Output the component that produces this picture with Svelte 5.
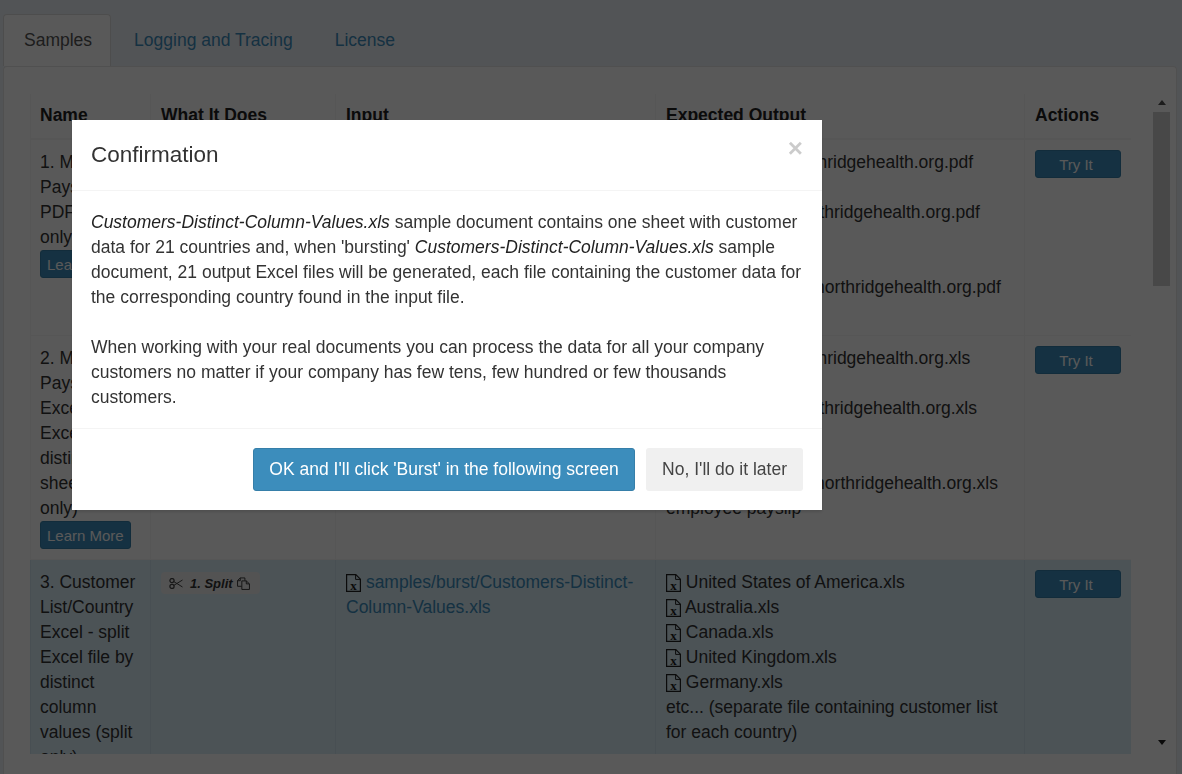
<script>
    const tabs = ['Samples', 'Logging and Tracing', 'License'];

    const rows = [
        {
            name: '1. Monthly Payslips PDF (split only)',
            input: 'samples/burst/Payslips-Distinct-Sheets.pdf',
            output: [
                'clyde.grew@northridgehealth.org.pdf',
                'kyle.butford@northridgehealth.org.pdf',
                'alfreda.waldback@northridgehealth.org.pdf',
            ],
        },
        {
            name: '2. Monthly Payslips Excel - split Excel file by distinct sheets (split only)',
            input: 'samples/burst/Payslips-Distinct-Sheets.xls',
            output: [
                'clyde.grew@northridgehealth.org.xls',
                'kyle.butford@northridgehealth.org.xls',
                'alfreda.waldback@northridgehealth.org.xls',
            ],
        },
    ];

    const countries = ['United States of America.xls', 'Australia.xls', 'Canada.xls', 'United Kingdom.xls', 'Germany.xls'];
</script>

{#snippet fileIcon()}
    <svg class="file-icon" viewBox="0 0 15 18" width="15" height="18" aria-hidden="true">
        <path d="M.6.6h9.2l4.6 4.6v12.2H.6z" fill="none" stroke="currentColor" stroke-width="1.2" />
        <path d="M9.6.8v4.6h4.6" fill="none" stroke="currentColor" stroke-width="1" />
        <text x="7.5" y="15.6" text-anchor="middle" class="x-mark">x</text>
    </svg>
{/snippet}

{#snippet splitBadge(label)}
    <span class="badge">
        <svg class="scissors" viewBox="0 0 14 11" width="14" height="11" aria-hidden="true">
            <circle cx="3" cy="2.6" r="2.1" fill="none" stroke="currentColor" stroke-width="1.3" />
            <circle cx="3" cy="8.4" r="2.1" fill="none" stroke="currentColor" stroke-width="1.3" />
            <path d="M4.8 3.6 13.5 9M4.8 7.4 13.5 2" fill="none" stroke="currentColor" stroke-width="1" />
        </svg>
        <b>{label}</b>
        <svg class="copy" viewBox="0 0 14 14" width="13" height="13" aria-hidden="true">
            <path d="M8.5 4V1H3.5L.6 3.8V10H5" fill="none" stroke="currentColor" stroke-width="1" />
            <path d="M5.2 4.2H10l3.4 3.2v6H5.2z" fill="none" stroke="currentColor" stroke-width="1" />
            <path d="M3.5 1v3H.6M10 4.2v3.2h3.4" fill="none" stroke="currentColor" stroke-width="1" />
        </svg>
    </span>
{/snippet}

<div class="page">
    <ul class="nav-tabs">
        {#each tabs as tab, index}
            <li class:active={index === 0}>{tab}</li>
        {/each}
    </ul>

    <div class="tab-content">
        <div class="viewport">
            <table>
                <colgroup>
                    <col style="width: 120px" />
                    <col style="width: 185px" />
                    <col style="width: 320px" />
                    <col style="width: 369px" />
                    <col style="width: 108px" />
                </colgroup>
                <thead>
                    <tr>
                        <th>Name</th>
                        <th>What It Does</th>
                        <th>Input</th>
                        <th>Expected Output</th>
                        <th>Actions</th>
                    </tr>
                </thead>
                <tbody>
                    {#each rows as row}
                        <tr>
                            <td>
                                {row.name}<br />
                                <button class="btn-small">Learn More</button>
                            </td>
                            <td>{@render splitBadge('1. Split')}</td>
                            <td>{@render fileIcon()} <span class="link">{row.input}</span></td>
                            <td>
                                {#each row.output as file}
                                    <div>
                                        {@render fileIcon()} {file}<br />
                                        employee payslip
                                    </div>
                                {/each}
                            </td>
                            <td><button class="btn-small try">Try It</button></td>
                        </tr>
                    {/each}
                    <tr class="info">
                        <td>3. Customer List/Country Excel - split Excel file by distinct column values (split only)</td>
                        <td>{@render splitBadge('1. Split')}</td>
                        <td>{@render fileIcon()} <span class="link">samples/burst/Customers-Distinct-Column-Values.xls</span></td>
                        <td>
                            {#each countries as country}
                                {@render fileIcon()} {country}<br />
                            {/each}
                            etc... (separate file containing customer list for each country)
                        </td>
                        <td><button class="btn-small try">Try It</button></td>
                    </tr>
                </tbody>
            </table>
        </div>

        <div class="scrollbar">
            <span class="arrow up"></span>
            <span class="thumb"></span>
            <span class="arrow down"></span>
        </div>
    </div>
</div>

<div class="backdrop"></div>

<div class="modal" role="dialog" aria-modal="true">
    <header>
        <h4>Confirmation</h4>
        <span class="close">×</span>
    </header>
    <div class="modal-body">
        <p>
            <em>Customers-Distinct-Column-Values.xls</em> sample document contains one sheet with customer
            data for 21 countries and, when 'bursting' <em>Customers-Distinct-Column-Values.xls</em> sample
            document, 21 output Excel files will be generated, each file containing the customer data for
            the corresponding country found in the input file.
        </p>
        <p>
            When working with your real documents you can process the data for all your company
            customers no matter if your company has few tens, few hundred or few thousands
            customers.
        </p>
    </div>
    <footer>
        <button class="btn primary">OK and I'll click 'Burst' in the following screen</button>
        <button class="btn secondary">No, I'll do it later</button>
    </footer>
</div>

<style>
    :global(body) {
        overflow: hidden;
        background: #ecf0f5;
    }

    .page {
        height: 774px;
        box-sizing: border-box;
        padding: 14px 5px 0 3px;
        display: flex;
        flex-direction: column;
        background: #ecf0f5;
        font: 17.5px/25px "Liberation Sans", Arial, sans-serif;
        color: #333;
    }

    .nav-tabs {
        list-style: none;
        margin: 0;
        padding: 0;
        display: flex;
        gap: 2px;
    }

    .nav-tabs li {
        padding: 14px 20px 13px;
        height: 52px;
        box-sizing: border-box;
        color: #3c8dbc;
    }

    .nav-tabs li.active {
        color: #555;
        background: #fff;
        border: 1px solid #ddd;
        border-bottom: 0;
        border-radius: 4px 4px 0 0;
        padding: 13px 18px 13px 20px;
        margin-right: 1px;
    }

    .tab-content {
        flex: 1;
        display: flex;
        background: #fff;
        border: 1px solid #e4e4e4;
        border-bottom: 0;
        border-radius: 4px 4px 0 0;
        padding: 27px 6px 20px 26px;
        min-height: 0;
    }

    .viewport {
        flex: 1;
        overflow: hidden;
    }

    table {
        width: 1102px;
        table-layout: fixed;
        border-collapse: collapse;
    }

    th,
    td {
        padding: 10px;
        text-align: left;
        vertical-align: top;
        border: 1px solid #f7f7f7;
    }

    th:first-child,
    td:first-child {
        padding-left: 9px;
    }

    th {
        padding: 9px 10px 10px;
        color: #222;
        border-top: 0;
        border-bottom: 2px solid #f7f7f7;
    }

    td {
        color: #333;
    }

    tr.info td {
        background: #d9edf7;
        border-color: #cfe3ed;
    }

    .link {
        color: #3c8dbc;
    }

    .file-icon {
        vertical-align: -4px;
        color: #222;
    }

    .x-mark {
        font: 700 13px "Liberation Serif", serif;
        fill: currentColor;
    }

    .btn-small {
        height: 28px;
        box-sizing: border-box;
        padding: 0 6px;
        font: 15px "Liberation Sans", Arial, sans-serif;
        color: #fff;
        background: #3c8dbc;
        border: 1px solid #367fa9;
        border-radius: 3px;
        display: inline-block;
        vertical-align: top;
    }

    .btn-small.try {
        width: 86px;
        padding-right: 10px;
    }

    .badge {
        display: inline-flex;
        align-items: center;
        height: 22px;
        width: 99px;
        box-sizing: border-box;
        padding-left: 8px;
        margin-top: 2px;
        gap: 7px;
        background: #eee;
        border-radius: 4px;
        font: italic 13px "Liberation Sans", Arial, sans-serif;
        color: #333;
    }

    .badge b {
        margin-right: -3px;
    }

    .scissors {
        color: #444;
    }

    .scrollbar {
        width: 17px;
        margin: 1px 0 3px 22px;
        display: flex;
        flex-direction: column;
        align-items: center;
    }

    .arrow {
        width: 0;
        height: 0;
        border-left: 4px solid transparent;
        border-right: 4px solid transparent;
    }

    .arrow.up {
        border-bottom: 5px solid #505050;
        margin: 5px 0 7px;
    }

    .arrow.down {
        border-top: 5px solid #1d1d1d;
        margin: auto 0 6px;
    }

    .thumb {
        width: 17px;
        height: 174px;
        background: #cdcdcd;
    }

    .backdrop {
        position: fixed;
        inset: 0;
        background: rgba(0, 0, 0, 0.65);
    }

    .modal {
        position: fixed;
        left: 72px;
        top: 120px;
        width: 750px;
        background: #fff;
        box-shadow: 0 2px 3px rgba(0, 0, 0, 0.125);
        font: 17.5px/25px "Liberation Sans", Arial, sans-serif;
        color: #333;
    }

    .modal header {
        height: 71px;
        box-sizing: border-box;
        padding: 20px 19px 19px;
        border-bottom: 1px solid #f4f4f4;
        position: relative;
    }

    .modal h4 {
        margin: 0;
        font-size: 22.5px;
        font-weight: 400;
        line-height: 30px;
    }

    .close {
        position: absolute;
        right: 19px;
        top: 15px;
        font-size: 26px;
        font-weight: 700;
        line-height: 26px;
        color: #000;
        opacity: 0.2;
    }

    .modal-body {
        padding: 19px 19px 18px;
    }

    .modal-body p {
        margin: 0 0 25px;
    }

    .modal-body p:last-child {
        margin: 0;
    }

    .modal-body em {
        color: #222;
    }

    .modal footer {
        padding: 19px;
        border-top: 1px solid #f4f4f4;
        display: flex;
        justify-content: flex-end;
        gap: 11px;
    }

    .btn {
        height: 43px;
        box-sizing: border-box;
        padding: 0 15px;
        font: 17.5px "Liberation Sans", Arial, sans-serif;
        border-radius: 3px;
        border: 1px solid transparent;
    }

    .btn.primary {
        color: #fff;
        background: #3c8dbc;
        border-color: #367fa9;
        width: 382px;
    }

    .btn.secondary {
        color: #444;
        background: #f0f0f0;
    }
</style>
